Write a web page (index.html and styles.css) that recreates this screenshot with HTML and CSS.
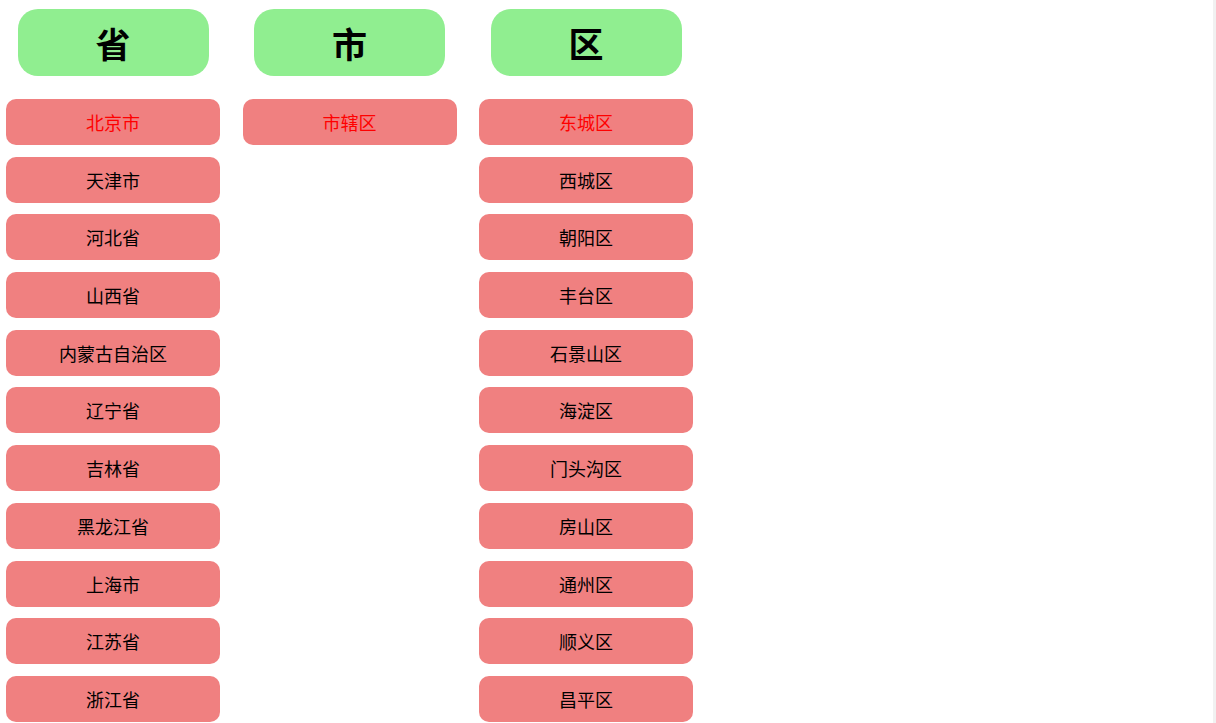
FILE: index.html
```html
<!DOCTYPE html>
<html lang="zh-CN">
<head>
<meta charset="utf-8">
<title>省市区</title>
<link rel="stylesheet" href="styles.css">
</head>
<body>
<div class="page">
  <main class="picker">
    <section class="col">
      <div class="head">省</div>
      <ul class="list">
        <li class="item active">北京市</li>
        <li class="item">天津市</li>
        <li class="item">河北省</li>
        <li class="item">山西省</li>
        <li class="item">内蒙古自治区</li>
        <li class="item">辽宁省</li>
        <li class="item">吉林省</li>
        <li class="item">黑龙江省</li>
        <li class="item">上海市</li>
        <li class="item">江苏省</li>
        <li class="item">浙江省</li>
      </ul>
    </section>
    <section class="col">
      <div class="head">市</div>
      <ul class="list">
        <li class="item active">市辖区</li>
      </ul>
    </section>
    <section class="col">
      <div class="head">区</div>
      <ul class="list">
        <li class="item active">东城区</li>
        <li class="item">西城区</li>
        <li class="item">朝阳区</li>
        <li class="item">丰台区</li>
        <li class="item">石景山区</li>
        <li class="item">海淀区</li>
        <li class="item">门头沟区</li>
        <li class="item">房山区</li>
        <li class="item">通州区</li>
        <li class="item">顺义区</li>
        <li class="item">昌平区</li>
      </ul>
    </section>
  </main>
  <div class="track"></div>
</div>
</body>
</html>
```
FILE: styles.css
```css
html, body {
  margin: 0;
  padding: 0;
  height: 100%;
  overflow: hidden;
  background: #fff;
}
body {
  font-family: "Noto Sans CJK SC", "Liberation Sans", sans-serif;
  color: #000;
}
.page {
  display: flex;
  height: 100vh;
}
.picker {
  flex: 1;
  display: flex;
  align-items: flex-start;
  gap: 22.5px;
  padding-left: 6px;
}
.col {
  width: 214px;
  display: flex;
  flex-direction: column;
  align-items: center;
}
.head {
  width: 191px;
  height: 67px;
  margin-top: 9px;
  border-radius: 20px;
  background: #90ee90;
  font-size: 35px;
  font-weight: bold;
  line-height: 67px;
  text-align: center;
}
.list {
  list-style: none;
  margin: 23px 0 0;
  padding: 0;
  width: 100%;
}
.item {
  height: 46px;
  line-height: 46px;
  margin-bottom: 11.7px;
  border-radius: 10px;
  background: #f08080;
  font-size: 18px;
  text-align: center;
}
.item.active {
  color: #ff0000;
}
.track {
  width: 3px;
  background: #f1f1f1;
}
```
